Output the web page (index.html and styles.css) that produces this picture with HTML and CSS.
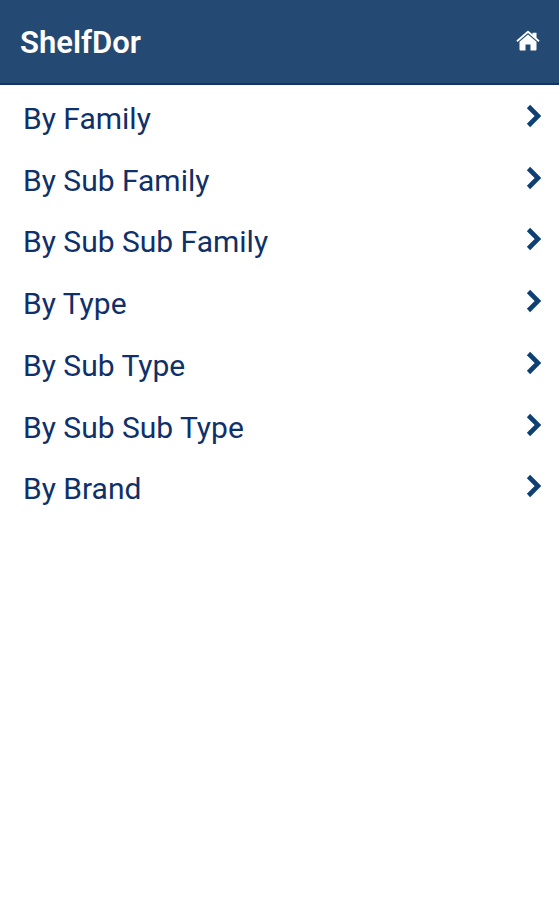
FILE: index.html
```html
<!DOCTYPE html>
<html lang="en">
<head>
<meta charset="utf-8">
<meta name="viewport" content="width=device-width, initial-scale=1">
<title>ShelfDor</title>
<link rel="stylesheet" href="styles.css">
</head>
<body>
<svg class="defs" aria-hidden="true">
  <symbol id="chevron" viewBox="0 0 16 24"><path d="M2.500 2.500 12 12 2.500 21.500" fill="none" stroke="currentColor" stroke-width="4.600"/></symbol>
</svg>
<header class="bar">
  <h1 class="title">ShelfDor</h1>
  <a class="home" href="#" aria-label="Home">
    <svg viewBox="0 0 24 22" aria-hidden="true"><path d="M1 11.300 12 1.800 23 11.300" fill="none" stroke="currentColor" stroke-width="1.800" stroke-linejoin="round"/><path d="M16.500 2.800h4v6.200l-4-3.500zM12 4.500l8.500 7.300v7.700q0 1-1 1h-5v-6h-5v6h-5q-1 0-1-1v-7.700z" fill="currentColor"/></svg>
  </a>
</header>
<main>
  <ul class="menu">
    <li><a class="item" href="#">By Family<svg class="chevron" aria-hidden="true"><use href="#chevron"/></svg></a></li>
    <li><a class="item" href="#">By Sub Family<svg class="chevron" aria-hidden="true"><use href="#chevron"/></svg></a></li>
    <li><a class="item" href="#">By Sub Sub Family<svg class="chevron" aria-hidden="true"><use href="#chevron"/></svg></a></li>
    <li><a class="item" href="#">By Type<svg class="chevron" aria-hidden="true"><use href="#chevron"/></svg></a></li>
    <li><a class="item" href="#">By Sub Type<svg class="chevron" aria-hidden="true"><use href="#chevron"/></svg></a></li>
    <li><a class="item" href="#">By Sub Sub Type<svg class="chevron" aria-hidden="true"><use href="#chevron"/></svg></a></li>
    <li><a class="item" href="#">By Brand<svg class="chevron" aria-hidden="true"><use href="#chevron"/></svg></a></li>
  </ul>
</main>
</body>
</html>
```
FILE: styles.css
```css
* { box-sizing: border-box; }
body {
  margin: 0;
  background: #fff;
  color: #0f3068;
  font-family: Roboto, "Liberation Sans", sans-serif;
}
.defs { display: none; }
.bar {
  display: flex;
  align-items: flex-start;
  justify-content: space-between;
  padding: 25px 19px 22px 20px;
  border-bottom: 2px solid #0f336a;
  background: #244a73;
  color: #fff;
}
.title { margin: 0; font-size: 31px; line-height: 36px; font-weight: 600; }
.home { display: block; padding-top: 5px; color: inherit; }
.home svg { display: block; width: 24px; height: 22px; }
.menu {
  display: grid;
  grid-auto-rows: 1fr;
  min-height: 432px;
  margin: 4px 0 0;
  padding: 0;
  list-style: none;
}
.item {
  display: flex;
  justify-content: space-between;
  padding: 12px 17px 12px 23px;
  color: inherit;
  font-size: 30px;
  line-height: 36px;
  text-decoration: none;
}
.chevron { width: 16px; height: 24px; margin-top: 3px; color: #0f4074; }
```
